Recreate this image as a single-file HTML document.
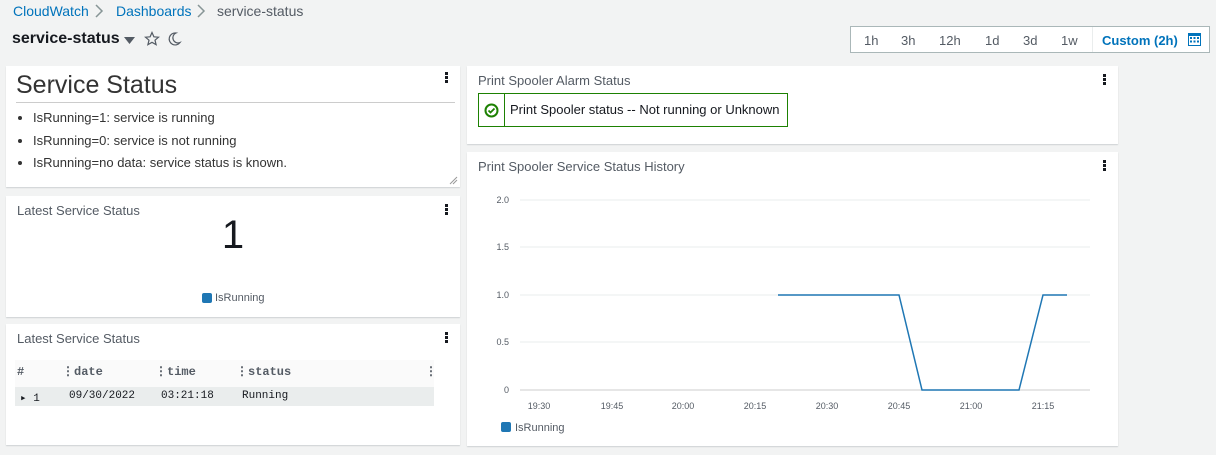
<!DOCTYPE html>
<html><head><meta charset="utf-8"><style>
*{margin:0;padding:0;box-sizing:border-box}
body{width:1216px;height:455px;background:#f2f3f3;font-family:"Liberation Sans",sans-serif;color:#16191f;position:relative;overflow:hidden}
.a{position:absolute}
.p{position:absolute;background:#fff;box-shadow:0 1px 1px rgba(0,28,36,.15)}
.t{position:absolute;left:11px;top:7px;font-size:13px;color:#545b64}
.k{position:absolute;right:12px;top:8px;width:3px}
.k i{display:block;width:3px;height:3px;background:#16191f;margin-bottom:1px}
.mono{font-family:"Liberation Mono",monospace}
</style></head><body>
<div class="a" style="left:13px;top:3px;font-size:14px;color:#0073bb">CloudWatch</div>
<svg class="a" style="left:94px;top:4px" width="10" height="14"><path d="M2 1l6 6-6 6" stroke="#879596" stroke-width="1.5" fill="none"/></svg>
<div class="a" style="left:116px;top:3px;font-size:14px;color:#0073bb">Dashboards</div>
<svg class="a" style="left:196px;top:4px" width="10" height="14"><path d="M2 1l6 6-6 6" stroke="#879596" stroke-width="1.5" fill="none"/></svg>
<div class="a" style="left:217px;top:3px;font-size:14px;color:#545b64">service-status</div>
<div class="a" style="left:12px;top:30px;font-size:16px;font-weight:bold">service-status</div>
<svg class="a" style="left:124px;top:36px" width="11" height="8"><path d="M0 1h11L5.5 8z" fill="#545b64"/></svg>
<svg class="a" style="left:144px;top:31px" width="16" height="16"><path d="M8 1.5l1.9 4.3 4.6.4-3.5 3 1.1 4.5L8 11.3 3.9 13.7 5 9.2 1.5 6.2l4.6-.4z" fill="none" stroke="#545b64" stroke-width="1.2"/></svg>
<svg class="a" style="left:166px;top:31px" width="16" height="16"><path d="M10 2a6 6 0 1 0 4 9.5A5 5 0 0 1 10 2z" fill="none" stroke="#545b64" stroke-width="1.2"/></svg>
<div class="a" style="left:850px;top:26px;width:360px;height:27px;border:1px solid #aab7b8;background:#fff;font-size:13px;color:#545b64">
<span class="a" style="left:13px;top:6px">1h</span><span class="a" style="left:50px;top:6px">3h</span><span class="a" style="left:88px;top:6px">12h</span><span class="a" style="left:134px;top:6px">1d</span><span class="a" style="left:172px;top:6px">3d</span><span class="a" style="left:210px;top:6px">1w</span>
<div class="a" style="left:241px;top:0;width:1px;height:25px;background:#eaeded"></div>
<span class="a" style="left:251px;top:6px;color:#0073bb;font-weight:bold">Custom (2h)</span>
<svg class="a" style="left:337px;top:6px" width="13" height="13"><rect x="0.5" y="0.5" width="12" height="12" fill="#fff" stroke="#0073bb"/><rect x="0" y="0" width="13" height="3" fill="#0073bb"/><g fill="#0073bb"><rect x="2" y="4" width="2" height="2"/><rect x="5.5" y="4" width="2" height="2"/><rect x="9" y="4" width="2" height="2"/><rect x="2" y="7.5" width="2" height="2"/><rect x="5.5" y="7.5" width="2" height="2"/><rect x="9" y="7.5" width="2" height="2"/></g></svg>
</div>

<div class="p" style="left:6px;top:66px;width:454px;height:121px">
<div class="a" style="left:10px;top:5px;font-size:25px;color:#333">Service Status</div>
<div class="a" style="left:10px;top:36px;width:439px;height:1px;background:#ccc"></div>
<ul class="a" style="left:27px;top:41px;font-size:13px;color:#333;line-height:22.5px">
<li>IsRunning=1: service is running</li><li>IsRunning=0: service is not running</li><li>IsRunning=no data: service status is known.</li></ul>
<svg class="a" style="left:443px;top:110px" width="9" height="9"><path d="M1 8L8 1M4 8L8 4" stroke="#999"/></svg>
<div class="k" style="top:6px"><i></i><i></i><i></i></div>
</div>

<div class="p" style="left:6px;top:196px;width:454px;height:121px">
<div class="t">Latest Service Status</div><div class="k"><i></i><i></i><i></i></div>
<div class="a" style="left:0;top:17px;width:454px;text-align:center;font-size:40px;color:#16191f">1</div>
<div class="a" style="left:196px;top:97px;width:10px;height:10px;background:#1f77b4;border-radius:2px"></div>
<div class="a" style="left:209px;top:96px;font-size:11px;color:#545b64">IsRunning</div>
</div>

<div class="p" style="left:6px;top:324px;width:454px;height:121px">
<div class="t">Latest Service Status</div><div class="k"><i></i><i></i><i></i></div>
<div class="a mono" style="left:9px;top:36px;width:419px;height:27px;background:#fafafa;font-size:12px;font-weight:bold;color:#545b64">
<span class="a" style="left:2px;top:5px">#</span><span class="a" style="left:47px;top:4px">⋮date</span><span class="a" style="left:140px;top:4px">⋮time</span><span class="a" style="left:221px;top:4px">⋮status</span><span class="a" style="left:410px;top:4px">⋮</span></div>
<div class="a mono" style="left:9px;top:63px;width:419px;height:19px;background:#eaeded;font-size:11px;color:#16191f">
<span class="a" style="left:5px;top:4px">▸ 1</span><span class="a" style="left:54px;top:3px">09/30/2022</span><span class="a" style="left:146px;top:3px">03:21:18</span><span class="a" style="left:227px;top:3px">Running</span></div>
</div>

<div class="p" style="left:467px;top:66px;width:651px;height:78px">
<div class="t">Print Spooler Alarm Status</div><div class="k"><i></i><i></i><i></i></div>
<div class="a" style="left:11px;top:27px;width:310px;height:34px;border:1px solid #1d8102">
<div class="a" style="left:25px;top:0;width:1px;height:32px;background:#1d8102"></div>
<svg class="a" style="left:5px;top:9px" width="15" height="15"><circle cx="7.5" cy="7.5" r="6" fill="none" stroke="#1d8102" stroke-width="2"/><path d="M4.5 7.5l2 2 4-4" fill="none" stroke="#1d8102" stroke-width="1.8"/></svg>
<div class="a" style="left:31px;top:8px;font-size:13px;color:#16191f">Print Spooler status -- Not running or Unknown</div></div>
</div>

<div class="p" style="left:467px;top:152px;width:651px;height:294px">
<div class="t">Print Spooler Service Status History</div><div class="k"><i></i><i></i><i></i></div>
<svg class="a" style="left:0;top:0" width="651" height="294" font-family="Liberation Sans" font-size="9" fill="#545b64">
<g stroke="#eaeded"><line x1="53" x2="623" y1="48" y2="48"/><line x1="53" x2="623" y1="95" y2="95"/><line x1="53" x2="623" y1="143" y2="143"/><line x1="53" x2="623" y1="190" y2="190"/></g>
<line x1="53" x2="623" y1="238" y2="238" stroke="#ccc"/>
<g text-anchor="end"><text x="42" y="51">2.0</text><text x="42" y="98">1.5</text><text x="42" y="146">1.0</text><text x="42" y="193">0.5</text><text x="42" y="241">0</text></g>
<g text-anchor="middle"><text x="72" y="257">19:30</text><text x="145" y="257">19:45</text><text x="216" y="257">20:00</text><text x="288" y="257">20:15</text><text x="360" y="257">20:30</text><text x="432" y="257">20:45</text><text x="504" y="257">21:00</text><text x="576" y="257">21:15</text></g>
<polyline points="311,143 432,143 455,238 552,238 576,143 600,143" fill="none" stroke="#1f77b4" stroke-width="1.5"/>
<rect x="34" y="270" width="10" height="10" rx="2" fill="#1f77b4"/><text x="48" y="279" font-size="11">IsRunning</text>
</svg>
</div>
</body></html>
